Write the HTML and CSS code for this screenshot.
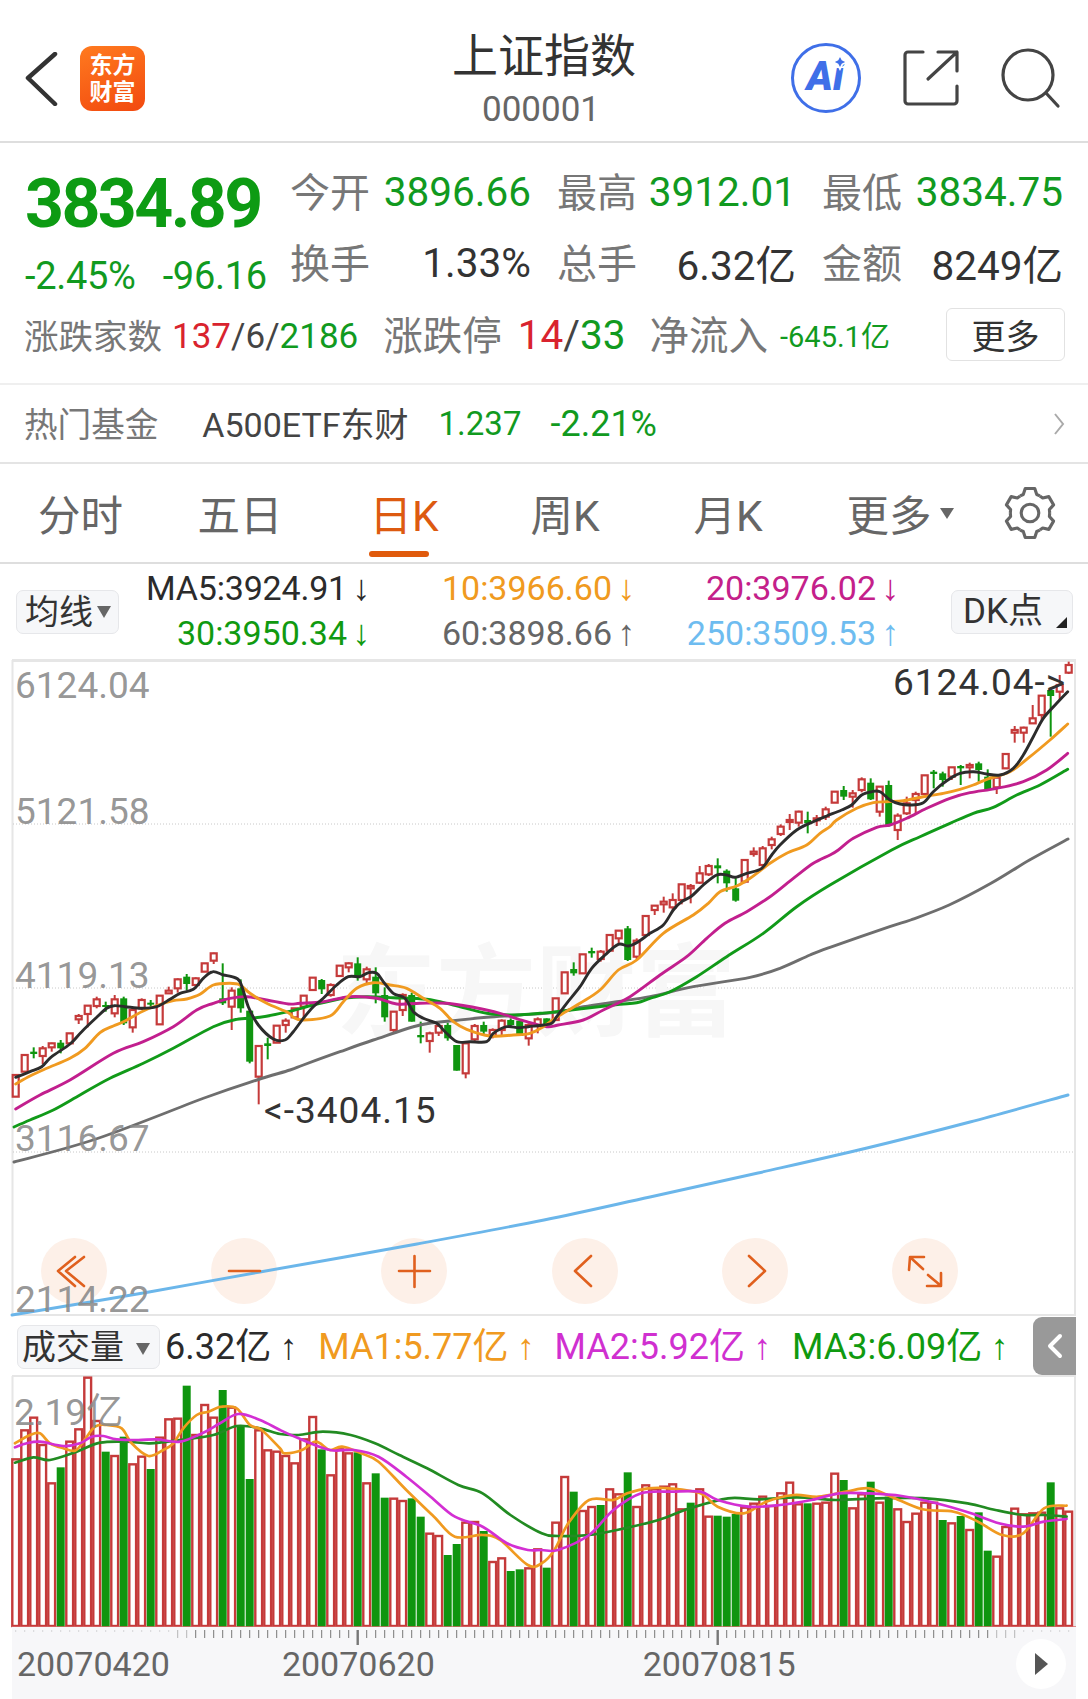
FILE: index.html
```html
<!DOCTYPE html>
<html lang="zh-CN">
<head>
<meta charset="utf-8">
<title>上证指数</title>
<link rel="stylesheet" href="styles.css">
</head>
<body>
<div class="page">
  <header class="topbar">
    <div class="top-left">
      <svg class="back" viewBox="0 0 34 54"><path d="M31 2 4 26l27 26"/></svg>
      <div class="logo"><span>东方</span><span>财富</span></div>
    </div>
    <div class="title">
      <div class="name">上证指数</div>
      <div class="code">000001</div>
    </div>
    <div class="top-right">
      <div class="ai">
        <span class="ai-text">Ai</span>
        <svg class="ai-star" viewBox="0 0 12 12"><path d="M6 0 8 4 12 6 8 8 6 12 4 8 0 6 4 4z"/></svg>
      </div>
      <svg class="share" viewBox="0 0 58 58"><path d="M21 3H6A3 3 0 0 0 3 6v46a3 3 0 0 0 3 3h46a3 3 0 0 0 3-3V37M26 30 55 3M36 3h19v19"/></svg>
      <svg class="search" viewBox="0 0 62 62"><circle cx="27" cy="27" r="25"/><path d="M45 45 57 58"/></svg>
    </div>
  </header>

  <section class="quote">
    <div class="quote-top">
      <div class="quote-price">
        <div class="price">3834.89</div>
        <div class="delta"><span>-2.45%</span><span>-96.16</span></div>
      </div>
      <div class="stats">
        <div class="stat"><span class="lbl">今开</span><span class="val up">3896.66</span></div>
        <div class="stat"><span class="lbl">最高</span><span class="val up">3912.01</span></div>
        <div class="stat"><span class="lbl">最低</span><span class="val up">3834.75</span></div>
        <div class="stat"><span class="lbl">换手</span><span class="val">1.33%</span></div>
        <div class="stat"><span class="lbl">总手</span><span class="val">6.32亿</span></div>
        <div class="stat"><span class="lbl">金额</span><span class="val">8249亿</span></div>
      </div>
    </div>
    <div class="breadth">
      <span class="b-lbl b-first">涨跌家数</span>
      <span class="b-num b-n1"><em class="red">137</em>/6/<em class="grn">2186</em></span>
      <span class="b-lbl2 b-l2">涨跌停</span>
      <span class="b-num2 b-n2"><em class="red">14</em>/<em class="grn">33</em></span>
      <span class="b-lbl2 b-l3">净流入</span>
      <span class="b-flow">-645.1亿</span>
      <button class="more-btn">更多</button>
    </div>
  </section>

  <section class="fund">
    <span class="fund-lbl">热门基金</span>
    <span class="fund-name">A500ETF东财</span>
    <span class="fund-val">1.237</span>
    <span class="fund-pct">-2.21%</span>
    <svg class="fund-go" viewBox="0 0 12 24"><path d="M2 2l8 10-8 10"/></svg>
  </section>

  <nav class="tabs">
    <div class="tab"><span>分时</span></div>
    <div class="tab"><span>五日</span></div>
    <div class="tab active"><span>日K</span></div>
    <div class="tab"><span>周K</span></div>
    <div class="tab"><span>月K</span></div>
    <div class="tab"><span>更多</span><i class="tab-caret"></i></div>
    <svg class="gear" viewBox="-27 -27 54 54">
      <g id="tooth"><path d="M-9.5-16.45-6.5-17.85-4.6-23.6H4.6L6.5-17.85 9.5-16.45"/></g>
      <use href="#tooth" transform="rotate(60)"/>
      <use href="#tooth" transform="rotate(120)"/>
      <use href="#tooth" transform="rotate(180)"/>
      <use href="#tooth" transform="rotate(240)"/>
      <use href="#tooth" transform="rotate(300)"/>
      <circle r="8.5"/>
    </svg>
  </nav>

  <section class="legend">
    <button class="pick pick-ma">均线<i class="caret"></i></button>
    <div class="ma-grid">
      <span class="ma c-black ma-first">MA5:3924.91<i class="ar">↓</i></span>
      <span class="ma c-orange">10:3966.60<i class="ar">↓</i></span>
      <span class="ma c-rose">20:3976.02<i class="ar">↓</i></span>
      <span class="ma c-green">30:3950.34<i class="ar">↓</i></span>
      <span class="ma c-gray">60:3898.66<i class="ar">↑</i></span>
      <span class="ma c-blue">250:3509.53<i class="ar">↑</i></span>
    </div>
    <button class="pick pick-dk">DK点<i class="corner"></i></button>
  </section>

  <div class="chart-main"><svg id="kline" class="plot" viewBox="12 660 1064 655" width="1064" height="655"></svg></div>

  <section class="vol-legend">
    <button class="pick pick-vol">成交量<i class="caret caret-vol"></i></button>
    <span class="vma c-black v0">6.32亿<i class="ar">↑</i></span>
    <span class="vma c-orange v1">MA1:5.77亿<i class="ar">↑</i></span>
    <span class="vma c-violet v2">MA2:5.92亿<i class="ar">↑</i></span>
    <span class="vma c-green v3">MA3:6.09亿<i class="ar">↑</i></span>
    <div class="collapse"><svg viewBox="0 0 16 26"><path d="M13 3 3 13l10 10"/></svg></div>
  </section>

  <div class="chart-vol"><svg id="volume" class="plot" viewBox="12 1375 1064 252" width="1064" height="252"></svg></div>

  <footer class="axis">
    <svg id="ticks" class="ticks" viewBox="12 1627 1064 20" width="1064" height="20"></svg>
    <div class="dates">
      <span class="date d1">20070420</span>
      <span class="date d2">20070620</span>
      <span class="date d3">20070815</span>
    </div>
    <div class="play"><i></i></div>
  </footer>
</div>
<script src="chart.js"></script>
</body>
</html>
```
FILE: styles.css
```css
* { box-sizing: border-box; }
html, body { margin: 0; padding: 0; background: #fff; }
body { font-family: Roboto, "Noto Sans CJK SC", sans-serif; color: #333; }
em, i { font-style: normal; }
button { font-family: inherit; margin: 0; padding: 0; }
.page { width: 1088px; height: 1699px; overflow: hidden; display: flex; flex-direction: column; }

/* top bar */
.topbar { height: 143px; flex: none; display: grid; grid-template-columns: 1fr auto 1fr; border-bottom: 2px solid #dedede; }
.top-left { display: flex; align-items: flex-start; padding: 46px 0 0 24px; }
.back { width: 34px; height: 54px; margin-top: 6px; fill: none; stroke: #333; stroke-width: 4.5; stroke-linecap: round; stroke-linejoin: round; }
.logo { width: 65px; height: 65px; margin-left: 22px; border-radius: 12px; background: linear-gradient(160deg, #ff7a1f, #f2490f); color: #fff; font-size: 23px; font-weight: 700; line-height: 27px; display: flex; flex-direction: column; align-items: center; justify-content: center; }
.title { text-align: center; padding-top: 28px; }
.name { font-size: 46px; line-height: 56px; color: #333; }
.code { font-size: 35px; line-height: 40px; color: #666; margin-top: 6px; margin-right: 6px; }
.top-right { display: flex; align-items: flex-start; justify-content: flex-end; padding: 43px 28px 0 0; }
.ai { position: relative; width: 70px; height: 70px; border: 3.5px solid #3f6fe8; border-radius: 50%; color: #3f6fe8; text-align: center; }
.ai-text { font-size: 40px; line-height: 62px; font-weight: 900; font-style: italic; margin-left: -2px; }
.ai-star { position: absolute; left: 39px; top: 9px; width: 14px; height: 14px; fill: #3f6fe8; stroke: #fff; stroke-width: 1.5; overflow: visible; }
.share { width: 58px; height: 58px; margin: 6px 0 0 41px; fill: none; stroke: #444; stroke-width: 3.2; stroke-linecap: round; stroke-linejoin: round; }
.search { width: 62px; height: 62px; margin: 5px -3px 0 41px; fill: none; stroke: #444; stroke-width: 3.2; stroke-linecap: round; }

/* quote */
.quote { height: 242px; flex: none; padding: 13px 0 0 0; border-bottom: 2px solid #efefef; }
.quote-top { display: flex; }
.quote-price { width: 290px; padding-left: 25px; flex: none; }
.price { font-size: 68px; letter-spacing: -2.6px; line-height: 97px; font-weight: 700; color: #0d9b13; }
.delta { font-size: 38px; line-height: 46px; color: #119a1f; display: flex; gap: 27px; letter-spacing: -.3px; }
.stats { display: grid; grid-template-columns: 241px 239px 241px; column-gap: 26px; grid-auto-rows: 71px; }
.stat { display: flex; justify-content: space-between; align-items: center; font-size: 40.5px; }
.lbl { color: #777; font-size: 40px; margin-bottom: 3px; }
.val { color: #333; }
.val.up { color: #119a1f; }
.breadth { height: 70px; display: flex; align-items: center; padding: 0 23px 0 24px; color: #555; }
.b-lbl { font-size: 34.5px; color: #777; }
.b-num { font-size: 35px; margin-left: 10px; margin-top: 5px; color: #444; }
.b-lbl2 { font-size: 39.5px; color: #777; margin-bottom: 4px; }
.b-num2 { font-size: 40.5px; margin-left: 16px; margin-top: 2px; color: #444; }
.b-l2 { margin-left: 25px; }
.b-l3 { margin-left: 24px; }
.b-flow { font-size: 29px; margin-left: 12px; color: #119a1f; }
.red { color: #d9232e; }
.grn { color: #119a1f; }
.more-btn { margin-left: auto; width: 119px; height: 53px; background: #fff; border: 1.5px solid #e2e2e2; border-radius: 6px; font-size: 34px; color: #333; }

/* fund row */
.fund { height: 79px; flex: none; display: flex; align-items: center; padding: 0 23px 0 24px; border-bottom: 2px solid #e4e4e4; }
.fund-lbl { font-size: 33.6px; color: #777; margin-bottom: 3px; }
.fund-name { font-size: 34px; color: #444; margin-left: 44px; margin-bottom: 3px; }
.fund-val { font-size: 33px; color: #119a1f; margin-left: 30px; }
.fund-pct { font-size: 36px; color: #119a1f; margin-left: 29px; }
.fund-go { margin-left: auto; width: 12px; height: 24px; fill: none; stroke: #aaa; stroke-width: 2; }

/* tabs */
.tabs { height: 100px; flex: none; display: grid; grid-template-columns: 161px 158px 170px 152px 174px 170px auto; align-items: center; border-bottom: 2px solid #dedede; padding-bottom: 1px; }
.tab { text-align: center; font-size: 42.5px; color: #666; }
.tab span { position: relative; display: inline-block; }
.tab.active { color: #dd5a10; }
.tab.active span::after { content: ""; position: absolute; left: 0; bottom: -14px; width: 60px; height: 6px; border-radius: 3px; background: #e05a0c; }
.tab-caret { display: inline-block; margin-left: 8px; border: 7px solid transparent; border-top: 11px solid #666; border-bottom: 0; vertical-align: 12px; }
.gear { width: 56px; height: 56px; margin-left: 17px; fill: none; stroke: #666; stroke-width: 3; stroke-linejoin: round; }

/* legends */
.legend { height: 96px; flex: none; display: flex; align-items: center; padding: 0 15px 0 16px; }
.pick { position: relative; background: #f6f7f9; border: 1.5px solid #e6e7ea; border-radius: 7px; color: #333; text-align: left; }
.pick-ma { width: 103px; height: 44px; padding-left: 8px; line-height: 40px; font-size: 34px; }
.pick-dk { width: 122px; height: 44px; margin-left: auto; padding-left: 11px; line-height: 40px; font-size: 35px; }
.pick-vol { width: 143px; height: 44px; margin-top: 4px; padding-left: 4px; line-height: 36px; font-size: 34px; }
.caret { position: absolute; right: 7px; top: 15px; border: 7px solid transparent; border-top: 12px solid #666; border-bottom: 0; }
.caret-vol { right: 9px; top: 17px; }
.corner { position: absolute; right: 5px; bottom: 5px; border-style: solid; border-width: 0 0 11px 11px; border-color: transparent transparent #222 transparent; }
.ma-grid { display: grid; grid-template-columns: 254px 265px 264px; grid-auto-rows: 45px; margin-top: -5px; }
.ma { font-size: 34px; line-height: 45px; text-align: right; white-space: nowrap; }
.ma-first { letter-spacing: -.2px; }
.ar { display: inline-block; width: 23px; text-align: center; margin-left: 3px; font-family: "Liberation Sans", sans-serif; font-size: 36px; letter-spacing: 0; white-space: nowrap; }
.c-black { color: #2b2b2b; }
.c-orange { color: #f09a20; }
.c-rose { color: #c4208a; }
.c-green { color: #109a10; }
.c-gray { color: #666; }
.c-blue { color: #6ebcf0; }
.c-violet { color: #d030d0; }
.plot { display: block; overflow: visible; }
.chart-main { height: 655px; flex: none; padding-left: 12px; }
.vol-legend { height: 60px; flex: none; display: flex; align-items: center; padding-left: 17px; }
.vma { font-size: 36px; white-space: nowrap; margin-top: -4px; }
.vma .ar { font-size: 36px; width: 23px; margin-left: 6px; }
.v0 { margin-left: 5px; }
.v1 { margin-left: 18px; }
.v2 { margin-left: 17px; }
.v3 { margin-left: 18px; }
.collapse { margin-left: auto; margin-right: 12px; margin-top: 2px; width: 43px; height: 58px; border-radius: 9px 0 0 9px; background: #999; display: flex; align-items: center; justify-content: center; }
.collapse svg { width: 16px; height: 26px; fill: none; stroke: #fff; stroke-width: 4; stroke-linecap: round; stroke-linejoin: round; }
.chart-vol { height: 252px; flex: none; padding-left: 12px; }

/* date axis */
.axis { position: relative; height: 72px; flex: none; margin: 0 12px; background: #f7f7f9; }
.ticks { position: absolute; left: 0; top: 0; }
.dates { display: flex; padding: 15px 0 0 5px; }
.date { font-size: 34px; line-height: 44px; color: #666; }
.d2 { margin-left: 112px; }
.d3 { margin-left: 208px; }
.play { position: absolute; left: 1004px; top: 12px; width: 50px; height: 50px; border-radius: 50%; background: #fff; }
.play i { position: absolute; left: 19px; top: 14px; border-style: solid; border-width: 11.5px 0 11.5px 13px; border-color: transparent transparent transparent #555; }
```
FILE: chart.js
```js
(function () {
  var NS = 'http://www.w3.org/2000/svg';
  function el(parent, tag, attrs, text) {
    var n = document.createElementNS(NS, tag);
    for (var k in attrs) n.setAttribute(k, attrs[k]);
    if (text) n.textContent = text;
    parent.appendChild(n);
    return n;
  }
  var RED = '#c53a3a', GREEN = '#0f950f';
  function xAt(i) { return 15.7 + 9 * i; }

  /* candle rows: kind, body top, body bottom, wick top, wick bottom, in zoomed crops */
  var candleGroups = [
    { oy: 940, rows: [
      ['R',405,470],['R',345,395],['G',335,342,322,355],['R',325,348,318,372],['R',310,322,308,335],
      ['G',308,325,300,340],['R',280,310],['R',228,238,222,252],['R',197,222,197,262],['R',178,198,170,205],
      ['G',195,200,185,215],['R',178,220,165,232],['G',175,250,170,255],['R',210,262,205,278],['R',180,205,175,210],
      ['G',188,193,180,200],['R',167,253],['R',152,160,140,160],['R',118,145,115,158],['G',110,132,102,150],
      ['R',115,135,112,145],['R',70,95],['R',40,62,38,72],['G',175,190,70,195],['R',152,200,142,270],
      ['G',145,205,118,218],['G',212,365,212,370],['R',318,410,318,493],['G',310,318,293,358],['R',257,308]
    ]},
    { oy: 930, rows: [
      ['R',272,285,265,308],['R',235,262],['R',197,230,197,262],['R',143,180],['G',150,178,147,192],
      ['R',165,195,160,200],['R',107,138],['R',100,112,97,127],['G',100,140,82,152],['R',118,148,110,160],
      ['G',140,190,112,220],['G',195,262,172,275],['R',245,300,245,312],['R',195,240,190,258],['G',195,275,188,275],
      ['G',315,322,275,340],['R',310,333,305,368],['R',288,308,280,318],['G',285,325,278,332],['G',345,422],
      ['R',340,430,340,445],['R',288,328,282,335],['G',285,305,275,312],['R',300,318,295,325],['R',272,300,268,320],
      ['G',270,285,265,290],['G',272,318],['R',285,325,280,347],['R',268,288,262,310],['G',265,285]
    ]},
    { oy: 790, rows: [
      ['R',625,690],['R',547,610],['G',537,550,517,557],['R',493,550],['G',483,490,473,503],
      ['R',485,507,480,515],['R',435,482],['R',422,445,420,465],['G',415,510,408,513],['R',452,500,445,508],
      ['R',378,435],['R',347,360,345,375],['R',335,343,320,368],['R',330,352,310,362],['R',283,330,283,343],
      ['R',288,295,282,340],['R',250,278,228,282],['R',228,253,222,258],['G',226,235,205,280],['G',242,280,238,305],
      ['G',295,332,262,335],['R',210,275,210,280],['R',185,192,172,200],['R',175,225,168,235],['R',148,165,140,178],
      ['R',110,132,103,138],['R',90,95,72,120],['R',65,98,62,110],['G',90,100,65,130]
    ]},
    { oy: 650, rows: [
      ['R',505,510,495,528],['R',478,500,470,510],['R',425,458],['G',420,440,408,450],['R',430,440,420,473],
      ['R',388,420,382,427],['G',398,448,385,450],['R',410,485,410,500],['G',405,525,392,530],['R',497,540,490,570],
      ['R',460,490,440,495],['R',432,450,425,490],['R',376,432],['G',365,372,360,415],['G',370,390,365,410],
      ['R',352,380,352,390],['G',348,355,345,405],['R',345,352,338,385],['G',340,360,335,395],['G',380,418,358,420],
      ['R',383,412,383,432],['R',312,355],['R',240,248,228,278],['R',233,248,230,278],['R',205,220,165,222],
      ['R',137,195,137,210],['G',120,138,120,260],['R',105,125,75,150],['R',45,68,35,72]
    ]}
  ];

  function crop(ox, oy, sx, pts) {
    var out = [];
    for (var i = 0; i < pts.length; i += 2) out.push([ox + pts[i] / sx, oy + pts[i + 1] / 3]);
    return out;
  }
  function merge(segs) {
    var out = [];
    segs.forEach(function (s) {
      s.forEach(function (p) {
        if (!out.length || p[0] > out[out.length - 1][0] + 4) out.push(p);
      });
    });
    return out;
  }
  function smooth(p) {
    var d = 'M' + p[0][0].toFixed(1) + ' ' + p[0][1].toFixed(1);
    for (var i = 0; i < p.length - 1; i++) {
      var a = p[Math.max(0, i - 1)], b = p[i], c = p[i + 1], e = p[Math.min(p.length - 1, i + 2)];
      d += 'C' + (b[0] + (c[0] - a[0]) / 6).toFixed(1) + ' ' + (b[1] + (c[1] - a[1]) / 6).toFixed(1) + ' ' +
        (c[0] - (e[0] - b[0]) / 6).toFixed(1) + ' ' + (c[1] - (e[1] - b[1]) / 6).toFixed(1) + ' ' +
        c[0].toFixed(1) + ' ' + c[1].toFixed(1);
    }
    return d;
  }
  function z7(a) { return crop(10, 940, 3, a); }
  function z8(a) { return crop(280, 930, 3, a); }
  function z9(a) { return crop(550, 790, 3, a); }
  function z10(a) { return crop(810, 650, 3, a); }

  var priceLines = [
    { c: '#6bb6ea', p: [[12,1315],[149,1292],[260,1272],[417,1244],[544,1220],[650,1197],[758,1173],[867,1148],[970,1122],[1068,1095]] },
    { c: '#6e6e6e', p: merge([[[14,1162],[96,1139],[207,1097],[257,1080]],
        z7([690,430,840,390]),
        z8([70,405,180,365,280,330,420,285,520,272,620,262,720,255,840,245]),
        z9([100,650,200,635,300,620,430,590,600,562,690,535,780,495,840,472]),
        crop(540,650,2.86,[1000,830,1060,810,1170,765,1290,700,1400,630,1510,567])]) },
    { c: '#119a19', p: merge([[[14,1127]],
        z7([60,540,130,510,210,465,300,415,400,370,490,325,610,260,680,238,750,232,835,215]),
        z8([100,225,190,205,260,200,340,203,440,208,520,225,620,250,690,255,780,250,830,245]),
        z9([30,670,190,645,260,638,300,625,360,605,440,560,530,500,640,430,740,350,840,285]),
        z10([245,600,330,560,420,520,490,490,550,472,620,435,690,405,773,358])]) },
    { c: '#c21f8e', p: merge([
        z7([17,507,90,465,180,420,310,340,400,305,490,260,560,210,610,190,660,175,710,170,770,180,835,192]),
        z8([60,220,130,215,210,200,290,205,350,222,420,220,500,220,580,232,660,250,740,275,800,290,835,285]),
        z9([100,690,160,660,240,620,330,555,410,500,470,445,525,400,590,365,660,320,730,265,790,220,840,195]),
        z10([85,600,130,565,200,532,240,525,290,505,350,475,420,445,480,428,560,415,640,395,710,360,773,310])]) },
    { c: '#f09a20', p: merge([
        z7([17,432,60,408,110,385,180,355,225,325,270,278,310,258,345,243,395,215,445,195,490,182,530,177,570,163,610,135,660,130,690,135,720,160,770,190,835,218]),
        z8([40,262,70,270,150,258,190,215,230,175,280,158,330,165,380,175,430,205,480,235,520,275,560,298,630,318,700,315,750,310,790,290,830,262]),
        z9([30,685,90,640,150,600,205,540,260,510,340,430,430,375,475,340,510,305,560,288,600,265,660,220,710,190,770,165,810,130,840,110]),
        z10([40,545,80,510,140,475,190,458,230,455,280,452,340,440,400,430,450,418,490,405,530,388,600,365,660,320,720,270,773,222])]) },
    { c: '#2c2c2c', p: merge([
        z7([17,412,60,395,95,380,125,350,180,312,215,275,260,232,290,205,312,197,345,200,395,205,440,200,480,178,510,160,550,148,580,115,608,95,640,105,665,110,690,125,715,200,745,255,790,297,825,300]),
        z8([40,305,70,265,100,230,130,205,170,165,205,140,240,140,265,128,290,130,310,155,340,190,375,205,400,245,430,265,470,280,495,305,530,335,570,335,620,335,640,310,680,290,715,293,745,290,790,285,815,280,830,260]),
        z9([50,640,90,590,125,535,165,495,205,463,235,468,265,455,300,430,340,405,370,360,395,335,425,318,460,285,500,255,530,255,555,262,590,250,635,235,665,195,690,165,740,120,790,95,830,78]),
        z10([40,498,95,480,125,465,155,435,185,425,210,425,240,450,270,462,300,465,340,458,370,425,410,392,450,370,490,365,530,372,570,375,610,355,640,315,670,260,700,205,740,160,773,125])]) }
  ];

  /* ---------- main chart ---------- */
  var k = document.getElementById('kline');
  el(k, 'path', { d: 'M12.5 1315V661H1075V1315', fill: 'none', stroke: '#e6e6e6', 'stroke-width': 2 });
  el(k, 'path', { d: 'M12 660H1076M12 1315H1076', fill: 'none', stroke: '#e6e6e6', 'stroke-width': 2 });
  [824, 988, 1152].forEach(function (y) {
    el(k, 'line', { x1: 13, x2: 1075, y1: y, y2: y, stroke: '#c8c8c8', 'stroke-width': 1, 'stroke-dasharray': '1 2' });
  });
  el(k, 'text', { x: 336, y: 1028, 'font-size': 100, 'font-weight': 700, fill: '#f7f7f7', 'font-family': '"Noto Sans CJK SC", sans-serif' }, '东方财富');

  [74, 244, 414, 585, 755, 925].forEach(function (cx) {
    el(k, 'circle', { cx: cx, cy: 1271, r: 33, fill: '#fdf0e8' });
  });

  var idx = 0;
  candleGroups.forEach(function (g) {
    g.rows.forEach(function (r) {
      var x = xAt(idx++), top = g.oy + r[1] / 3, bot = g.oy + r[2] / 3;
      var wt = r.length > 3 ? g.oy + r[3] / 3 : top, wb = r.length > 4 ? g.oy + r[4] / 3 : bot;
      var col = r[0] === 'R' ? RED : GREEN;
      el(k, 'line', { x1: x, x2: x, y1: wt, y2: wb, stroke: col, 'stroke-width': 2 });
      if (r[0] === 'R') {
        el(k, 'rect', { x: x - 3, y: top, width: 6, height: Math.max(bot - top, 2), fill: '#fff', stroke: col, 'stroke-width': 2.2 });
      } else {
        el(k, 'rect', { x: x - 3.5, y: top, width: 7, height: Math.max(bot - top, 2), fill: col });
      }
    });
  });

  priceLines.forEach(function (l) {
    el(k, 'path', { d: smooth(l.p), fill: 'none', stroke: l.c, 'stroke-width': 2.9, 'stroke-linejoin': 'round', 'stroke-linecap': 'round' });
  });

  var icons = el(k, 'g', { fill: 'none', stroke: '#e0601e', 'stroke-width': 2.6, 'stroke-linecap': 'round', 'stroke-linejoin': 'round' });
  ['M84 1257 66 1271 84 1286M75 1257 58 1271 75 1286',
   'M229 1271H260',
   'M399 1271H430M414.5 1256V1287',
   'M591 1256 575 1271 591 1286',
   'M749 1256 765 1271 749 1286',
   'M911 1258 923 1269M909 1270 910 1257H924M940 1285 928 1275M941 1273V1286H927'
  ].forEach(function (d) { el(icons, 'path', { d: d }); });

  [['6124.04', 698], ['5121.58', 824], ['4119.13', 988], ['3116.67', 1151], ['2114.22', 1312]].forEach(function (t) {
    el(k, 'text', { x: 15, y: t[1], 'font-size': 37, fill: '#8a8a8a', 'fill-opacity': .9, 'font-family': 'Roboto, sans-serif' }, t[0]);
  });
  el(k, 'text', { x: 264, y: 1123, 'font-size': 37, 'letter-spacing': 1, fill: '#333', 'font-family': 'Roboto, sans-serif' }, '<-3404.15');
  el(k, 'text', { x: 893, y: 695, 'font-size': 37, 'letter-spacing': 1, fill: '#333', 'font-family': 'Roboto, sans-serif' }, '6124.04->');

  /* ---------- volume chart ---------- */
  var vols = [715,628,590,672,787,742,662,625,470,600,695,705,650,730,707,747,650,595,593,497,642,552,590,510,560,615,777,628,688,692,705,727,655,588,688,763,685,697,697,787,760,833,833,840,835,890,938,945,1005,972,905,903,933,1023,1012,1053,1048,1042,985,
    1043,905,768,815,870,858,855,805,820,757,858,793,805,797,790,865,848,805,887,887,890,882,860,848,827,855,817,785,850,850,848,845,758,780,862,820,785,845,830,865,903,878,845,845,900,907,888,927,877,992,1007,918,863,880,877,875,787,862,872];
  var greens = {5:1,10:1,12:1,15:1,19:1,23:1,25:1,26:1,34:1,38:1,40:1,41:1,44:1,45:1,48:1,49:1,52:1,55:1,56:1,59:1,62:1,65:1,68:1,75:1,78:1,79:1,80:1,88:1,92:1,95:1,97:1,103:1,105:1,107:1,108:1,115:1};
  var v = document.getElementById('volume');
  el(v, 'path', { d: 'M12 1376H1076M12.5 1376V1627M1075 1376V1627', fill: 'none', stroke: '#e6e6e6', 'stroke-width': 2 });
  vols.forEach(function (t, i) {
    var x = xAt(i), y = 1220 + t / 3;
    if (greens[i]) el(v, 'rect', { x: x - 4, y: y, width: 8, height: 1627 - y, fill: GREEN });
    else el(v, 'rect', { x: x - 3.4, y: y + 1, width: 6.8, height: 1626 - y - 1, fill: '#fff', stroke: RED, 'stroke-width': 2.4 });
  });
  el(v, 'line', { x1: 12, x2: 1076, y1: 1627, y2: 1627, stroke: '#d86a6a', 'stroke-width': 1.5 });

  function z11(a) { return crop(0, 1360, 3, a); }
  function z5(a) { return crop(0, 1220, 2.88, a); }
  function z6(a) { return crop(544, 1220, 2.88, a); }
  [
    { c: '#228b22', p: merge([z11([45,308,100,292,150,300,230,275,300,248,380,245,450,250,540,240,640,225,710,198,780,205,840,222]),
        z5([860,645,930,635,1010,645,1080,670,1150,705,1230,745,1320,795,1390,820,1470,885,1560,940]),
        z6([40,948,130,945,210,930,330,900,420,865,530,835,620,838,730,832,840,840,960,835,1100,835,1220,850,1300,870,1380,885,1440,885,1505,890])]) },
    { c: '#f09a20', p: merge([z11([45,250,90,225,120,220,150,250,190,265,225,272,250,245,285,200,320,195,365,205,395,250,445,288,490,270,520,250,550,205,590,165,625,155,665,140,710,145,750,195,785,210,840,265]),
        z5([820,700,870,690,910,665,950,690,985,680,1040,700,1090,725,1170,810,1250,890,1310,950,1390,945,1440,960,1520,1035,1560,1030]),
        z6([30,990,70,910,130,840,200,840,240,820,300,805,360,805,450,820,500,860,575,880,640,845,720,825,790,830,870,815,935,805,1000,830,1090,868,1180,875,1250,905,1320,945,1380,940,1440,865,1505,857])]) },
    { c: '#d32fd3', p: merge([z11([45,262,80,250,120,245,190,258,240,250,275,230,310,228,350,238,415,240,470,238,540,245,610,218,660,190,715,162,780,180,840,210]),
        z5([860,655,950,690,1020,690,1090,710,1170,770,1240,830,1310,890,1390,920,1460,970,1520,990,1560,990]),
        z6([40,990,130,945,200,870,280,820,370,815,450,815,500,840,590,860,680,855,770,840,850,820,930,820,1030,828,1130,850,1230,880,1310,910,1380,920,1440,905,1505,897])]) }
  ].forEach(function (l) {
    el(v, 'path', { d: smooth(l.p), fill: 'none', stroke: l.c, 'stroke-width': 2.7, 'stroke-linejoin': 'round', 'stroke-linecap': 'round' });
  });
  el(v, 'text', { x: 14, y: 1425, 'font-size': 37, fill: '#8a8a8a', 'fill-opacity': .9, 'font-family': 'Roboto, "Noto Sans CJK SC", sans-serif' }, '2.19亿');

  /* ---------- ticks ---------- */
  var t = document.getElementById('ticks');
  for (var i = 0; i < 118; i++) {
    var x = xAt(i), major = i === 38 || i === 78;
    var inside = x >= 177 && x <= 1016;
    var fade = x < 177 ? 0.25 : x > 1016 ? 0.25 : (x < 195 || x > 995 ? 0.5 : 1);
    el(t, 'line', { x1: x, x2: x, y1: 1630, y2: major ? 1645 : (inside ? 1638 : 1632), stroke: '#777', 'stroke-width': major ? 2.4 : 1, opacity: fade });
  }
})();
```
